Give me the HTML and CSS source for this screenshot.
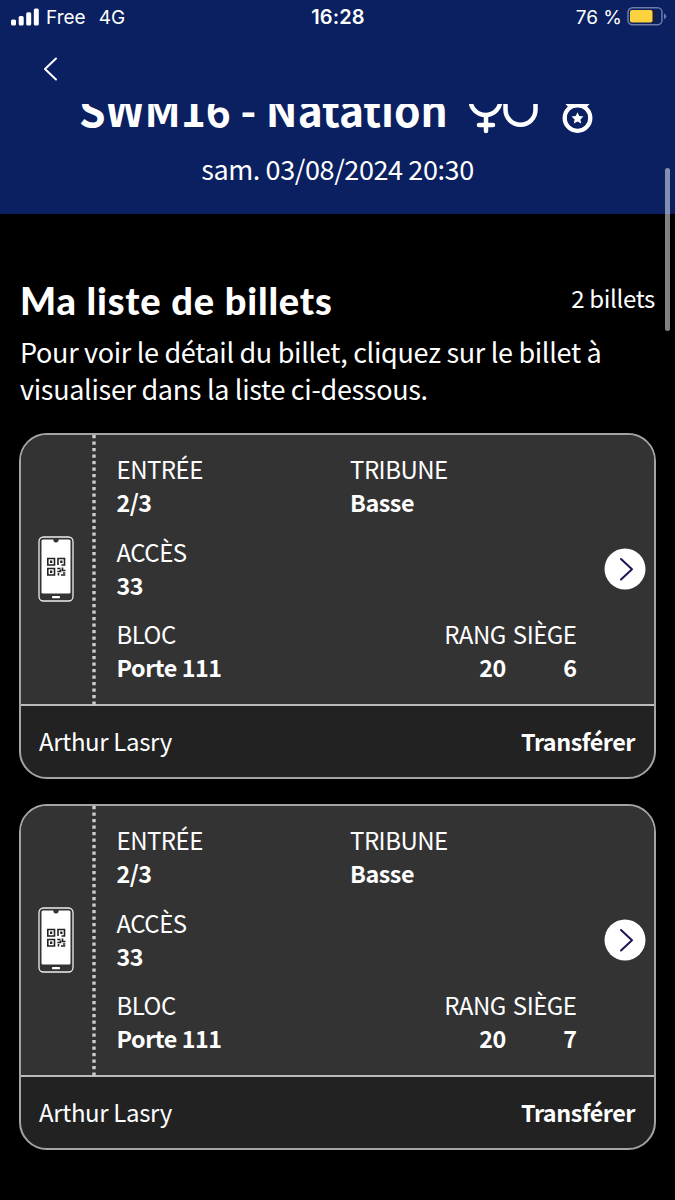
FILE: index.html
```html
<!DOCTYPE html>
<html lang="fr">
<head>
<meta charset="utf-8">
<title>Ma liste de billets</title>
<link rel="stylesheet" href="styles.css">
</head>
<body>
<svg class="defs" width="0" height="0" aria-hidden="true">
  <symbol id="phone" viewBox="0 0 36 66">
    <rect x="1" y="1" width="34" height="64" rx="4.5" fill="#333" stroke="#eee" stroke-width="1.3"/>
    <path d="M5 3.5H15.300C15.500 5.500 16 6.500 18 6.500S20.500 5.500 20.700 3.500H31Q32.500 3.500 32.500 5V56.500Q32.500 57.500 31 57.500H5Q3.500 57.500 3.500 56.500V5Q3.500 3.500 5 3.500Z" fill="#fff"/>
    <rect x="14" y="60" width="8" height="2.200" rx=".8" fill="#fff"/>
    <g fill="none" stroke="#222" stroke-width="1.600">
      <path d="M9.800 22.500h6.700v6.500h-6.700zM20 29V22.500h6.500V29H23.500M9.800 32.500h6.700v6.500h-6.700z"/>
      <path d="M19.300 32.500h3.200M24.500 31.500v3h3M19.300 35.500h3.200v-2M20.500 39.500v-2.500M23 39h4.300M25 37h2.300"/>
    </g>
    <path d="M12 24.600h2.300v2.300h-2.300zM22.200 24.600h2.300v2.300h-2.300zM12 34.600h2.300v2.300h-2.300z" fill="#222"/>
  </symbol>
  <symbol id="next" viewBox="0 0 42 42">
    <circle cx="21" cy="21" r="20.500" fill="#fff"/>
    <path d="M17 11L28 21.300L17 31.500" fill="none" stroke="#21135a" stroke-width="2" stroke-linecap="round" stroke-linejoin="round"/>
  </symbol>
</svg>

<header class="header">
  <div class="status">
    <div class="status-left">
      <svg width="28" height="18" viewBox="0 0 28 18" fill="#fff"><rect x="0" y="11.500" width="5" height="6" rx="1.500"/><rect x="7.700" y="8" width="5" height="9.500" rx="1.500"/><rect x="15.200" y="4.300" width="5" height="13.200" rx="1.500"/><rect x="22.800" y=".5" width="5" height="17" rx="1.500"/></svg>
      <span class="carrier">Free</span><span class="network">4G</span>
    </div>
    <div class="time">16:28</div>
    <div class="status-right">
      <span class="percent">76 %</span>
      <svg width="40" height="19" viewBox="0 0 40 19"><rect x="1" y=".8" width="34" height="17" rx="4.500" fill="none" stroke="#6c7ba8" stroke-width="1.500"/><rect x="3" y="3" width="26.500" height="12.600" rx="2.200" fill="#1a1f42"/><rect x="3" y="3" width="22.500" height="12.600" rx="2" fill="#fcd23f"/><path d="M37 6.500Q39.300 7.500 39.300 9.300T37 12.300Z" fill="#6c7ba8"/></svg>
    </div>
  </div>
  <div class="nav">
    <svg width="16" height="24" viewBox="0 0 16 24"><path d="M13 1.500L2 12L13 22.500" fill="none" stroke="#fff" stroke-width="2" stroke-linecap="round" stroke-linejoin="round"/></svg>
  </div>
  <div class="event">
    <h1 class="event-title">SWM16 - Natation</h1>
    <svg class="event-icons" width="126" height="30" viewBox="0 0 126 30" fill="none" stroke="#fff">
      <circle cx="16.500" cy="-4" r="15" stroke-width="4.500"/>
      <path d="M17 13V27M10 21H24" stroke-width="4.500" stroke-linecap="round"/>
      <path d="M36.500 -1V5.700A15 15 0 0 0 66.500 5.700V-1" stroke-width="4.500"/>
      <circle cx="108.500" cy="14" r="12.700" stroke-width="4.500"/>
      <path d="M96.500 0H120.500L117 4H100Z" fill="#fff" stroke="none"/>
      <circle cx="108.500" cy="14" r="10.600" fill="#0a2060" stroke="none"/>
      <path d="M108.500 8.200L110.300 12L114.500 12.500L111.400 15.400L112.200 19.600L108.500 17.500L104.800 19.600L105.600 15.400L102.500 12.500L106.700 12Z" fill="#fff" stroke="none"/>
    </svg>
  </div>
  <div class="date">sam. 03/08/2024 20:30</div>
</header>

<main class="content">
  <div class="heading">
    <h2 class="list-title">Ma liste de billets</h2>
    <span class="count">2 billets</span>
  </div>
  <p class="intro">Pour voir le détail du billet, cliquez sur le billet à<br>visualiser dans la liste ci-dessous.</p>

  <article class="ticket">
    <div class="ticket-body">
      <div class="stub"><svg width="36" height="66"><use href="#phone"/></svg></div>
      <svg class="perforation" width="4" height="272"><path d="M2 0V272" stroke="#ccc" stroke-width="3.400" stroke-dasharray="3.300 3.200"/></svg>
      <dl class="details">
        <div class="row"><div class="cell"><dt>ENTRÉE</dt><dd>2/3</dd></div><div class="cell"><dt>TRIBUNE</dt><dd>Basse</dd></div></div>
        <div class="row"><div class="cell"><dt>ACCÈS</dt><dd>33</dd></div></div>
        <div class="row seat-row"><div class="cell"><dt>BLOC</dt><dd>Porte 111</dd></div><div class="seat"><div><dt>RANG</dt><dd>20</dd></div><div><dt>SIÈGE</dt><dd>6</dd></div></div></div>
      </dl>
      <svg class="next" width="42" height="42"><use href="#next"/></svg>
    </div>
    <div class="ticket-foot"><span class="holder">Arthur Lasry</span><strong class="transfer">Transférer</strong></div>
  </article>

  <article class="ticket">
    <div class="ticket-body">
      <div class="stub"><svg width="36" height="66"><use href="#phone"/></svg></div>
      <svg class="perforation" width="4" height="272"><path d="M2 0V272" stroke="#ccc" stroke-width="3.400" stroke-dasharray="3.300 3.200"/></svg>
      <dl class="details">
        <div class="row"><div class="cell"><dt>ENTRÉE</dt><dd>2/3</dd></div><div class="cell"><dt>TRIBUNE</dt><dd>Basse</dd></div></div>
        <div class="row"><div class="cell"><dt>ACCÈS</dt><dd>33</dd></div></div>
        <div class="row seat-row"><div class="cell"><dt>BLOC</dt><dd>Porte 111</dd></div><div class="seat"><div><dt>RANG</dt><dd>20</dd></div><div><dt>SIÈGE</dt><dd>7</dd></div></div></div>
      </dl>
      <svg class="next" width="42" height="42"><use href="#next"/></svg>
    </div>
    <div class="ticket-foot"><span class="holder">Arthur Lasry</span><strong class="transfer">Transférer</strong></div>
  </article>
</main>
<div class="scrollbar"></div>
</body>
</html>
```
FILE: styles.css
```css
* { box-sizing: border-box; }
body {
  margin: 0;
  height: 1200px;
  overflow: hidden;
  background: #000;
  color: #fff;
  font-family: "Noto Sans CJK SC", "Noto Sans", sans-serif;
}
h1, h2, p, dl, dt, dd { margin: 0; }
svg { display: block; flex: none; }
.defs { position: absolute; }

.header { height: 214px; background: #0a2060; }
.status {
  display: grid;
  grid-template-columns: 1fr auto 1fr;
  align-items: center;
  height: 34px;
  padding: 1px 8px 0 11px;
  font-family: Inter, sans-serif;
  font-size: 19px;
  line-height: 33px;
}
.status-left, .status-right { display: flex; align-items: center; }
.status-left svg { margin-top: -1px; }
.status-right { justify-content: flex-end; gap: 5px; }
.status-right svg { margin-top: -2px; }
.carrier { margin-left: 7px; }
.network { margin-left: 13px; }
.time { margin-left: -2px; font-size: 20px; font-weight: 600; letter-spacing: .1px; }
.nav { height: 70px; padding: 23px 0 0 43px; }
.event {
  display: flex;
  height: 42px;
  padding-left: 79px;
  overflow: hidden;
}
.event-title {
  width: 390px;
  margin-top: -25px;
  font-size: 42.500px;
  font-weight: 700;
  line-height: 60px;
  white-space: nowrap;
}
.date {
  font-size: 27px;
  line-height: 46px;
  letter-spacing: -.4px;
  text-align: center;
}

.content { padding: 63px 19px 0 19px; }
.heading {
  display: flex;
  justify-content: space-between;
  height: 56px;
  padding: 0 1px;
  white-space: nowrap;
}
.list-title {
  font-family: Lato, sans-serif;
  font-size: 38px;
  font-weight: 900;
  line-height: 46px;
  letter-spacing: .800px;
}
.count { font-size: 24px; line-height: 42px; letter-spacing: -.350px; }
.intro {
  height: 100px;
  padding-left: 1px;
  font-size: 27px;
  line-height: 37px;
  letter-spacing: -.320px;
  white-space: nowrap;
}

.ticket {
  width: 637px;
  height: 346px;
  margin-bottom: 25px;
  border: 2px solid #a4a4a4;
  border-radius: 28px;
  overflow: hidden;
  background: #222;
}
.ticket-body {
  display: flex;
  height: 271px;
  border-bottom: 2px solid #bbb;
  background: #333;
}
.stub { display: flex; align-items: center; width: 71px; padding: 0 0 2px 17px; }
.details {
  width: 484px;
  margin-left: 20.500px;
  padding-top: 17px;
  font-size: 24px;
  line-height: 33px;
  letter-spacing: -.500px;
}
.row { display: flex; height: 82.500px; white-space: nowrap; }
.cell { width: 233.500px; }
.seat-row { justify-content: space-between; width: 460px; }
.seat { display: flex; gap: 7px; text-align: right; }
dd { font-size: 23.300px; font-weight: 600; line-height: 34px; letter-spacing: -.450px; }
.next { align-self: center; margin: 0 0 2px 3px; }
.ticket-foot {
  display: flex;
  justify-content: space-between;
  padding: 0 19px 0 18px;
  font-size: 24px;
  line-height: 70px;
  letter-spacing: -.350px;
}
.transfer { font-size: 23.300px; font-weight: 600; letter-spacing: -.450px; }
.scrollbar {
  position: absolute;
  top: 168px;
  right: 5px;
  width: 5px;
  height: 163px;
  border-radius: 3px;
  background: rgba(255, 255, 255, .5);
}
```
